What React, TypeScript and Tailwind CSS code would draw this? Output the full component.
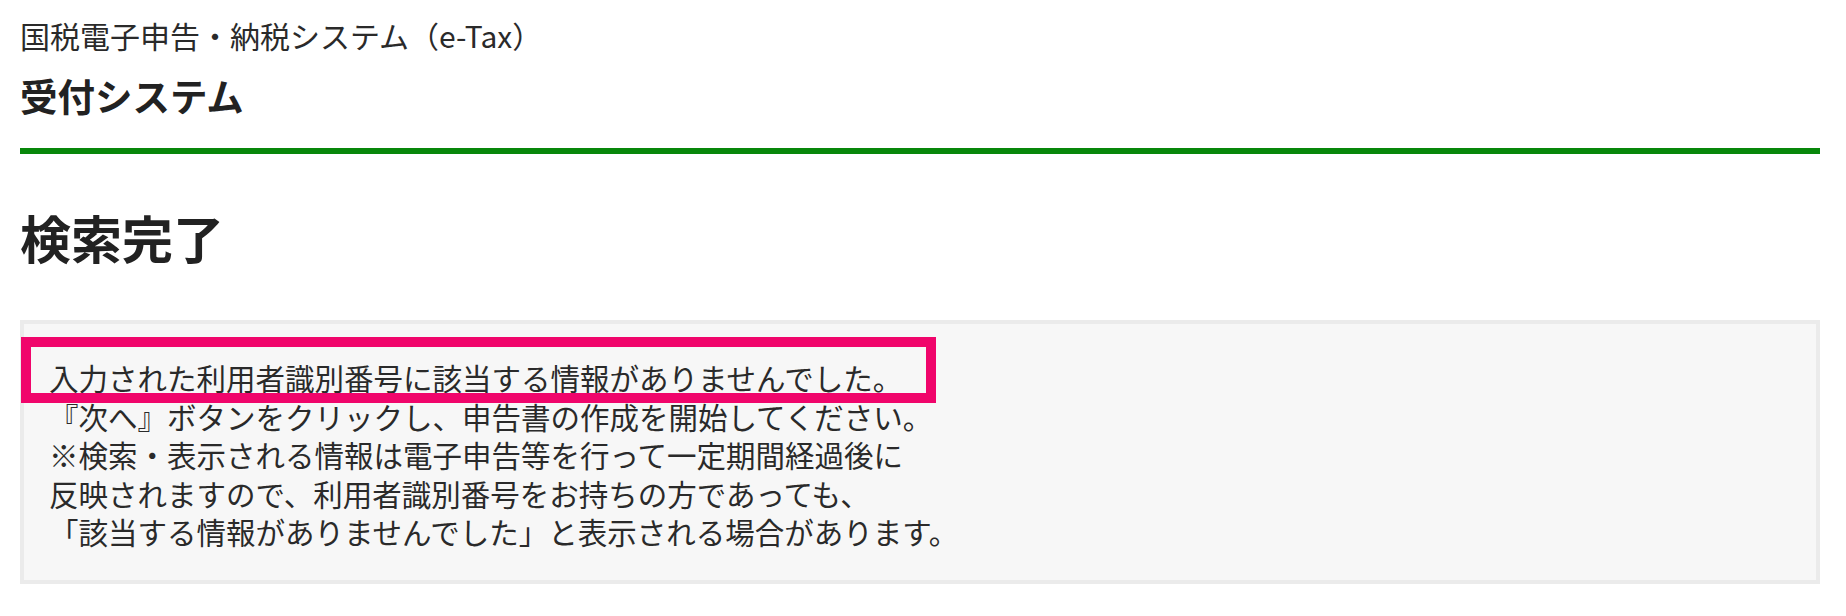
import React from "react";

const font = {
  fontFamily: '"Noto Sans CJK JP", "Noto Sans", sans-serif',
};

const lines = [
  "入力された利用者識別番号に該当する情報がありませんでした。",
  "『次へ』ボタンをクリックし、申告書の作成を開始してください。",
  "※検索・表示される情報は電子申告等を行って一定期間経過後に",
  "反映されますので、利用者識別番号をお持ちの方であっても、",
  "「該当する情報がありませんでした」と表示される場合があります。",
];

const App: React.FC = () => {
  return (
    <div
      className="min-h-screen bg-white text-[#2a2a2a] pl-[20px] pr-[26px] pt-[15px]"
      style={font}
    >
      {/* Header */}
      <p className="text-[30px] leading-[40px]">
        国税電子申告・納税システム（e-Tax）
      </p>
      <h2 className="mt-[18px] text-[37.5px] leading-[44px] font-bold text-[#222]">
        受付システム
      </h2>
      <div className="mt-[31px] h-[6px] bg-[#08870a]" />

      {/* Title */}
      <h1 className="mt-[51px] text-[51px] leading-[64px] font-bold text-[#222]">
        検索完了
      </h1>

      {/* Result box */}
      <div className="relative mt-[51px] border-4 border-[#ebebeb] bg-[#f7f7f7] pl-[25px] pt-[34px] pb-[29px]">
        {lines.map((t) => (
          <p key={t} className="text-[29.5px] leading-[38.5px]">
            {t}
          </p>
        ))}
        {/* highlight annotation */}
        <div className="absolute left-[-3px] top-[13px] w-[915px] h-[66px] border-[10px] border-[#f0056b]" />
      </div>
    </div>
  );
};

export default App;
